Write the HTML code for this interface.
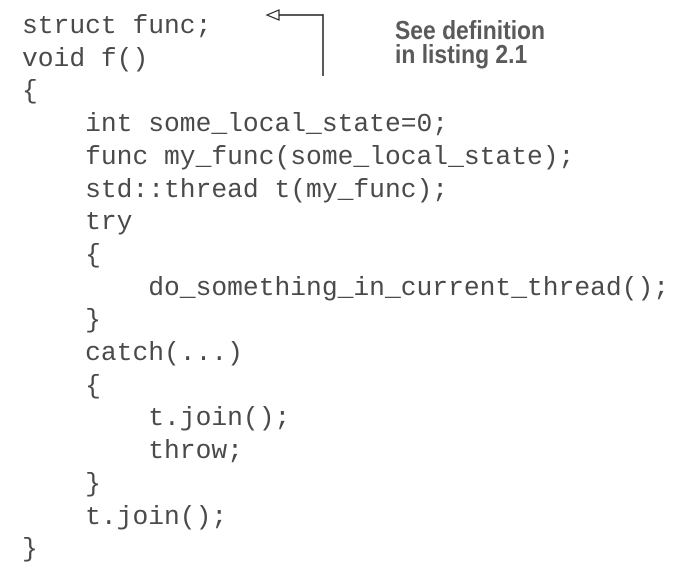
<!DOCTYPE html>
<html><head><meta charset="utf-8"><style>
html,body{margin:0;padding:0;background:#fff;width:684px;height:574px;overflow:hidden}
pre{position:absolute;left:22px;top:10px;margin:0;font-family:"Liberation Mono",monospace;font-size:26.3px;line-height:32.7px;color:#4a4a4a}
.note{position:absolute;left:395px;top:19px;font-family:"Liberation Sans Narrow","Liberation Sans",sans-serif;font-weight:bold;font-size:26px;line-height:23.5px;color:#5a5a5a;transform:scaleX(0.88);transform-origin:0 0;white-space:nowrap}
</style></head><body>
<pre>struct func;
void f()
{
    int some_local_state=0;
    func my_func(some_local_state);
    std::thread t(my_func);
    try
    {
        do_something_in_current_thread();
    }
    catch(...)
    {
        t.join();
        throw;
    }
    t.join();
}</pre>
<svg style="position:absolute;left:0;top:0" width="684" height="574">
<polygon points="267,15 279,10 279,20" fill="none" stroke="#222" stroke-width="1.2"/>
<line x1="279" y1="15" x2="323.5" y2="15" stroke="#222" stroke-width="1.5"/>
<line x1="323" y1="14.3" x2="323" y2="76" stroke="#222" stroke-width="1.5"/>
</svg>
<div class="note">See definition<br>in listing 2.1</div>
</body></html>
